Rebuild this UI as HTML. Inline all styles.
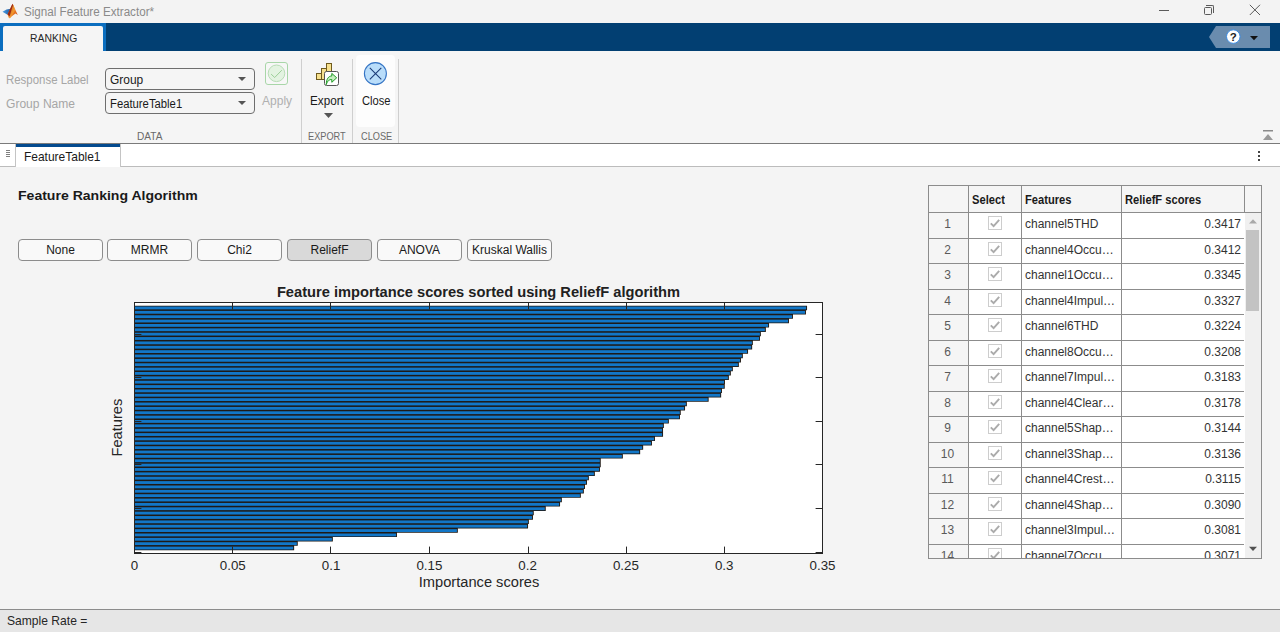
<!DOCTYPE html>
<html><head><meta charset="utf-8">
<style>
*{margin:0;padding:0;box-sizing:border-box}
html,body{width:1280px;height:632px;overflow:hidden;background:#f4f4f4;font-family:"Liberation Sans",sans-serif;color:#262626}
.abs{position:absolute}
.tx{position:absolute;white-space:nowrap;line-height:1;transform-origin:0 0}
#titlebar{position:absolute;left:0;top:0;width:1280px;height:23px;background:#f3f3f3}
#tabband{position:absolute;left:0;top:23px;width:1280px;height:28px;background:#023f72}
#tabhl{position:absolute;left:0;top:0;width:106px;height:28px;background:#0b6ebf}
#tab{position:absolute;left:3px;top:3px;width:100px;height:25px;background:#f5f5f5;border-radius:2px 2px 0 0}
#ribbon{position:absolute;left:0;top:51px;width:1280px;height:92px;background:#f5f5f5}
#ribline{position:absolute;left:0;top:143px;width:1280px;height:1px;background:#7a7a7a}
.dd{position:absolute;left:105px;width:150px;height:21.5px;border:1px solid #6e6e6e;border-radius:4px;background:#f5f5f5}
.dd i{position:absolute;right:8.5px;top:7.5px;width:0;height:0;border-left:4px solid transparent;border-right:4px solid transparent;border-top:4.5px solid #555}
.sep{position:absolute;top:59px;width:1px;height:84px;background:#cfcfcf}
#doctabs{position:absolute;left:0;top:144px;width:1280px;height:23px;background:#fff;border-bottom:1px solid #bcbcbc}
#dtab{position:absolute;left:15px;top:0;width:106px;height:23px;background:#fff;border-left:1px solid #c4c4c4;border-right:1px solid #c4c4c4}
#dtab b{position:absolute;left:0;top:0;width:104px;height:3px;background:#034a8e}
#status{position:absolute;left:0;top:609px;width:1280px;height:23px;background:#e6e6e6;border-top:1px solid #8c8c8c}
.btn{position:absolute;top:239px;width:85px;height:22px;border:1px solid #8c8c8c;border-radius:4px;background:#f9f9f9;font-size:12px;color:#1a1a1a;text-align:center;line-height:20px;white-space:nowrap}
.btn.sel{background:#d9d9d9}
.th{position:absolute;font-weight:bold;font-size:12.5px;color:#1a1a1a;white-space:nowrap;line-height:1;transform-origin:0 0}
.rn{position:absolute;height:25px;text-align:center;font-size:12px;color:#5a5a5a;line-height:25px}
.fn{position:absolute;font-size:12px;color:#333;line-height:25px;white-space:nowrap}
.sc{position:absolute;font-size:12px;color:#333;line-height:25px;text-align:right}
</style></head><body>
<div id="titlebar">
<svg class="abs" style="left:1px;top:2px" width="20" height="18" viewBox="0 0 20 18">
<defs><linearGradient id="lg1" x1="0" y1="0" x2="1" y2="0"><stop offset="0" stop-color="#4a9be0"/><stop offset="1" stop-color="#1f5fa8"/></linearGradient>
<linearGradient id="lg2" x1="0" y1="0" x2="1" y2="1"><stop offset="0" stop-color="#b83018"/><stop offset="0.5" stop-color="#f08a28"/><stop offset="1" stop-color="#c84018"/></linearGradient></defs>
<path d="M1.5 9.8 L5.5 7.6 L9.6 6.8 L8 10.5 L6.5 12.8 Z" fill="url(#lg1)"/>
<path d="M6.5 12.5 L11.5 1.8 L16.8 13 L14.5 11.5 L8 16.2 Z" fill="url(#lg2)"/>
<path d="M11.5 1.8 L13 6 L9 14.5 L6.5 12.5 Z" fill="#9a2a14"/><path d="M12.2 2.5 L14.2 8 L9.5 16 L8 16.2 Z" fill="#f29a30" opacity="0.85"/>
</svg>
<div class="abs" style="left:1159px;top:10px;width:10px;height:1px;background:#5a5a5a"></div>
<div class="abs" style="left:1204px;top:7px;width:8px;height:8px;border:1px solid #5a5a5a;border-radius:1.5px"></div>
<div class="abs" style="left:1206px;top:5px;width:8px;height:8px;border-top:1px solid #5a5a5a;border-right:1px solid #5a5a5a;border-radius:0 2px 0 0"></div>
<svg class="abs" style="left:1249px;top:4px" width="12" height="12" viewBox="0 0 12 12"><path d="M0.8 0.8 L11 11 M11 0.8 L0.8 11" stroke="#5a5a5a" stroke-width="1"/></svg>
</div>
<div id="tabband">
<div id="tabhl"><div id="tab"></div></div>
<svg class="abs" style="left:1209px;top:3px" width="62" height="22" viewBox="0 0 62 22"><path d="M0 11 L7 0 L61 0 L61 22 L7 22 Z" fill="#6a8cae"/>
<circle cx="24.3" cy="10.6" r="6.8" fill="#fff" stroke="#3a8ae0" stroke-width="1"/>
<text x="24.3" y="14.6" text-anchor="middle" font-family="Liberation Sans" font-weight="bold" font-size="11.5" fill="#222">?</text>
<path d="M41 10 L49 10 L45 14.3 Z" fill="#111"/></svg>
</div>
<div id="ribbon"></div>
<div class="dd" style="top:68px"><i></i></div>
<div class="dd" style="top:92px"><i></i></div>
<svg class="abs" style="left:265px;top:62px" width="23" height="23" viewBox="0 0 23 23">
<rect x="0.5" y="0.5" width="22" height="22" rx="2.5" fill="#f7f7f7" stroke="#a8d6a8"/>
<circle cx="11.5" cy="11.3" r="8.3" fill="#e3f3e1" stroke="#b8dcb6"/>
<path d="M6.1 12.1 L9.7 15.5 L16.8 8.2" fill="none" stroke="#9ccf98" stroke-width="1"/></svg>
<div class="sep" style="left:301px"></div>
<svg class="abs" style="left:315px;top:62px" width="25" height="25" viewBox="0 0 25 25">
<rect x="1.5" y="11.5" width="5" height="6" fill="#f6e08e" stroke="#6e5a1e"/>
<rect x="6.5" y="6.5" width="5" height="11" fill="#f6e08e" stroke="#6e5a1e"/>
<rect x="11.5" y="1.5" width="5" height="16" fill="#f6e08e" stroke="#6e5a1e"/>
<rect x="9.5" y="9.5" width="14" height="14" rx="2" fill="#fff" stroke="#555"/>
<path d="M11.3 22.6 C11.3 17 13.5 14 16.8 14 L16.8 11.4 L21.7 15.8 L16.8 20.3 L16.8 17.6 C14.6 17.2 12.4 18.8 11.3 22.6 Z" fill="#c6efbf" stroke="#1c9a22" stroke-width="1" stroke-linejoin="round"/></svg>
<svg class="abs" style="left:324px;top:113px" width="9" height="5" viewBox="0 0 9 5"><path d="M0 0 L9 0 L4.5 5 Z" fill="#555"/></svg>
<div class="sep" style="left:352px"></div>
<div class="abs" style="left:356px;top:55px;width:39px;height:72px;background:#fdfdfd;border-radius:4px"></div>
<svg class="abs" style="left:363px;top:61px" width="25" height="25" viewBox="0 0 25 25">
<circle cx="12.4" cy="12.6" r="11" fill="#b9ddfa" stroke="#3574c4" stroke-width="1.1"/>
<path d="M6.8 6.9 L18.3 18.4 M18.3 6.9 L6.8 18.4" stroke="#1c3c78" stroke-width="1.1"/></svg>
<div class="sep" style="left:398px"></div>
<svg class="abs" style="left:1262px;top:129px" width="12" height="12" viewBox="0 0 12 12"><rect x="1" y="1" width="10" height="1.5" fill="#8a8a8a"/><path d="M1 11 L6 5 L11 11 Z" fill="#9a9a9a"/></svg>
<div id="ribline"></div>
<div id="doctabs">
<div class="abs" style="left:6px;top:6px;width:4px;height:1px;background:#808080;box-shadow:0 2px 0 #808080,0 4px 0 #808080,0 6px 0 #808080"></div>
<div id="dtab"><b></b></div>
<div class="abs" style="left:1258px;top:6.5px;width:2px;height:2px;background:#444;box-shadow:0 4px 0 #444,0 8px 0 #444"></div>
</div>
<div class="btn" style="left:18.0px">None</div>
<div class="btn" style="left:107.0px">MRMR</div>
<div class="btn" style="left:197.0px">Chi2</div>
<div class="btn sel" style="left:287.0px">ReliefF</div>
<div class="btn" style="left:377.0px">ANOVA</div>
<div class="btn" style="left:467.0px">Kruskal Wallis</div>
<svg class="abs" width="1280" height="632" viewBox="0 0 1280 632" style="left:0;top:0">
<rect x="134.5" y="302.5" width="688" height="251" fill="#fff"/>
<path d="M134.50 305.77 L807.05 305.77 L807.05 310.13 L805.95 310.13 L805.95 314.50 L792.95 314.50 L792.95 318.86 L788.95 318.86 L788.95 323.23 L769.05 323.23 L769.05 327.59 L765.85 327.59 L765.85 331.96 L760.85 331.96 L760.85 336.32 L759.95 336.32 L759.95 340.69 L752.85 340.69 L752.85 345.05 L752.15 345.05 L752.15 349.42 L748.05 349.42 L748.05 353.78 L742.85 353.78 L742.85 358.15 L740.95 358.15 L740.95 362.51 L738.85 362.51 L738.85 366.88 L732.85 366.88 L732.85 371.24 L730.85 371.24 L730.85 375.61 L728.85 375.61 L728.85 379.97 L724.95 379.97 L724.95 384.34 L724.75 384.34 L724.75 388.70 L721.95 388.70 L721.95 393.07 L721.15 393.07 L721.15 397.43 L708.65 397.43 L708.65 401.80 L686.85 401.80 L686.85 406.16 L685.05 406.16 L685.05 410.53 L680.75 410.53 L680.75 414.89 L679.95 414.89 L679.95 419.26 L668.85 419.26 L668.85 423.62 L663.85 423.62 L663.85 427.99 L663.05 427.99 L663.05 432.35 L663.05 432.35 L663.05 436.72 L654.95 436.72 L654.95 441.08 L651.95 441.08 L651.95 445.45 L643.15 445.45 L643.15 449.81 L640.15 449.81 L640.15 454.18 L622.85 454.18 L622.85 458.54 L600.75 458.54 L600.75 462.91 L600.75 462.91 L600.75 467.27 L599.95 467.27 L599.95 471.64 L594.85 471.64 L594.85 476.00 L588.85 476.00 L588.85 480.37 L586.95 480.37 L586.95 484.73 L584.95 484.73 L584.95 489.10 L583.85 489.10 L583.85 493.46 L580.85 493.46 L580.85 497.83 L561.85 497.83 L561.85 502.19 L560.05 502.19 L560.05 506.56 L545.75 506.56 L545.75 510.92 L533.75 510.92 L533.75 515.29 L532.95 515.29 L532.95 519.65 L528.85 519.65 L528.85 524.02 L528.05 524.02 L528.05 528.38 L457.85 528.38 L457.85 532.75 L396.95 532.75 L396.95 537.11 L332.85 537.11 L332.85 541.48 L297.75 541.48 L297.75 545.84 L294.15 545.84 L294.15 550.21 L134.50 550.21 Z" fill="#1f1a16"/><g fill="#1277c8"><rect x="134.50" y="306.53" width="671.60" height="2.84"/>
<rect x="134.50" y="310.89" width="670.50" height="2.84"/>
<rect x="134.50" y="315.26" width="657.50" height="2.84"/>
<rect x="134.50" y="319.62" width="653.50" height="2.84"/>
<rect x="134.50" y="323.99" width="633.60" height="2.84"/>
<rect x="134.50" y="328.35" width="630.40" height="2.84"/>
<rect x="134.50" y="332.72" width="625.40" height="2.84"/>
<rect x="134.50" y="337.08" width="624.50" height="2.84"/>
<rect x="134.50" y="341.45" width="617.40" height="2.84"/>
<rect x="134.50" y="345.81" width="616.70" height="2.84"/>
<rect x="134.50" y="350.18" width="612.60" height="2.84"/>
<rect x="134.50" y="354.54" width="607.40" height="2.84"/>
<rect x="134.50" y="358.91" width="605.50" height="2.84"/>
<rect x="134.50" y="363.27" width="603.40" height="2.84"/>
<rect x="134.50" y="367.64" width="597.40" height="2.84"/>
<rect x="134.50" y="372.00" width="595.40" height="2.84"/>
<rect x="134.50" y="376.37" width="593.40" height="2.84"/>
<rect x="134.50" y="380.73" width="589.50" height="2.84"/>
<rect x="134.50" y="385.10" width="589.30" height="2.84"/>
<rect x="134.50" y="389.46" width="586.50" height="2.84"/>
<rect x="134.50" y="393.83" width="585.70" height="2.84"/>
<rect x="134.50" y="398.19" width="573.20" height="2.84"/>
<rect x="134.50" y="402.56" width="551.40" height="2.84"/>
<rect x="134.50" y="406.93" width="549.60" height="2.84"/>
<rect x="134.50" y="411.29" width="545.30" height="2.84"/>
<rect x="134.50" y="415.65" width="544.50" height="2.84"/>
<rect x="134.50" y="420.02" width="533.40" height="2.84"/>
<rect x="134.50" y="424.38" width="528.40" height="2.84"/>
<rect x="134.50" y="428.75" width="527.60" height="2.84"/>
<rect x="134.50" y="433.11" width="527.60" height="2.84"/>
<rect x="134.50" y="437.48" width="519.50" height="2.84"/>
<rect x="134.50" y="441.84" width="516.50" height="2.84"/>
<rect x="134.50" y="446.21" width="507.70" height="2.84"/>
<rect x="134.50" y="450.57" width="504.70" height="2.84"/>
<rect x="134.50" y="454.94" width="487.40" height="2.84"/>
<rect x="134.50" y="459.31" width="465.30" height="2.84"/>
<rect x="134.50" y="463.67" width="465.30" height="2.84"/>
<rect x="134.50" y="468.03" width="464.50" height="2.84"/>
<rect x="134.50" y="472.40" width="459.40" height="2.84"/>
<rect x="134.50" y="476.76" width="453.40" height="2.84"/>
<rect x="134.50" y="481.13" width="451.50" height="2.84"/>
<rect x="134.50" y="485.49" width="449.50" height="2.84"/>
<rect x="134.50" y="489.86" width="448.40" height="2.84"/>
<rect x="134.50" y="494.22" width="445.40" height="2.84"/>
<rect x="134.50" y="498.59" width="426.40" height="2.84"/>
<rect x="134.50" y="502.95" width="424.60" height="2.84"/>
<rect x="134.50" y="507.32" width="410.30" height="2.84"/>
<rect x="134.50" y="511.69" width="398.30" height="2.84"/>
<rect x="134.50" y="516.05" width="397.50" height="2.84"/>
<rect x="134.50" y="520.42" width="393.40" height="2.84"/>
<rect x="134.50" y="524.78" width="392.60" height="2.84"/>
<rect x="134.50" y="529.15" width="322.40" height="2.84"/>
<rect x="134.50" y="533.51" width="261.50" height="2.84"/>
<rect x="134.50" y="537.88" width="197.40" height="2.84"/>
<rect x="134.50" y="542.24" width="162.30" height="2.84"/>
<rect x="134.50" y="546.61" width="158.70" height="2.84"/></g>
<g stroke="#262626" stroke-width="1">
<line x1="134.50" y1="553.5" x2="134.50" y2="546.6"/><line x1="134.50" y1="302.5" x2="134.50" y2="309.4"/>
<line x1="232.50" y1="553.5" x2="232.50" y2="546.6"/><line x1="232.50" y1="302.5" x2="232.50" y2="309.4"/>
<line x1="330.50" y1="553.5" x2="330.50" y2="546.6"/><line x1="330.50" y1="302.5" x2="330.50" y2="309.4"/>
<line x1="429.50" y1="553.5" x2="429.50" y2="546.6"/><line x1="429.50" y1="302.5" x2="429.50" y2="309.4"/>
<line x1="528.50" y1="553.5" x2="528.50" y2="546.6"/><line x1="528.50" y1="302.5" x2="528.50" y2="309.4"/>
<line x1="626.50" y1="553.5" x2="626.50" y2="546.6"/><line x1="626.50" y1="302.5" x2="626.50" y2="309.4"/>
<line x1="724.50" y1="553.5" x2="724.50" y2="546.6"/><line x1="724.50" y1="302.5" x2="724.50" y2="309.4"/>
<line x1="822.50" y1="553.5" x2="822.50" y2="546.6"/><line x1="822.50" y1="302.5" x2="822.50" y2="309.4"/>
<line x1="134.5" y1="552.50" x2="141.4" y2="552.50"/><line x1="822.5" y1="552.50" x2="815.6" y2="552.50"/>
<line x1="134.5" y1="508.50" x2="141.4" y2="508.50"/><line x1="822.5" y1="508.50" x2="815.6" y2="508.50"/>
<line x1="134.5" y1="464.50" x2="141.4" y2="464.50"/><line x1="822.5" y1="464.50" x2="815.6" y2="464.50"/>
<line x1="134.5" y1="421.50" x2="141.4" y2="421.50"/><line x1="822.5" y1="421.50" x2="815.6" y2="421.50"/>
<line x1="134.5" y1="377.50" x2="141.4" y2="377.50"/><line x1="822.5" y1="377.50" x2="815.6" y2="377.50"/>
<line x1="134.5" y1="334.50" x2="141.4" y2="334.50"/><line x1="822.5" y1="334.50" x2="815.6" y2="334.50"/>
</g>
<rect x="134.5" y="302.5" width="688" height="251" fill="none" stroke="#262626" stroke-width="1"/>
<g font-family="Liberation Sans" font-size="13.33" fill="#262626">
<text id="xl0" x="134.50" y="569.8" text-anchor="middle">0</text>
<text id="xl1" x="232.79" y="569.8" text-anchor="middle">0.05</text>
<text id="xl2" x="331.07" y="569.8" text-anchor="middle">0.1</text>
<text id="xl3" x="429.36" y="569.8" text-anchor="middle">0.15</text>
<text id="xl4" x="527.64" y="569.8" text-anchor="middle">0.2</text>
<text id="xl5" x="625.93" y="569.8" text-anchor="middle">0.25</text>
<text id="xl6" x="724.21" y="569.8" text-anchor="middle">0.3</text>
<text id="xl7" x="822.50" y="569.8" text-anchor="middle">0.35</text>
</g>
<text id="c_title" x="478.5" y="296.6" text-anchor="middle" font-family="Liberation Sans" font-weight="bold" font-size="14.67" fill="#212121">Feature importance scores sorted using ReliefF algorithm</text>
<text id="c_xlab" x="479" y="586.9" text-anchor="middle" font-family="Liberation Sans" font-size="14.67" fill="#262626">Importance scores</text>
<text id="c_ylab" transform="translate(121.7 427.6) rotate(-90)" text-anchor="middle" font-family="Liberation Sans" font-size="14.67" fill="#262626">Features</text>
</svg>
<div class="abs" style="left:928px;top:185px;width:334px;height:374px;background:#fff"></div>
<div class="abs" style="left:928px;top:185px;width:334px;height:27px;background:#f5f5f5"></div>
<div class="abs" style="left:928px;top:212px;width:40px;height:346px;background:#f5f5f5"></div>
<div class="abs" style="left:1245px;top:213px;width:16px;height:345px;background:#f0f0f0"></div>
<svg class="abs" style="left:0;top:0" width="1280" height="632" viewBox="0 0 1280 632"><g stroke="#8c8c8c" stroke-width="1" shape-rendering="crispEdges">
<rect x="928.5" y="185.5" width="333" height="373" fill="none"/>
<line x1="968.5" y1="185" x2="968.5" y2="558"/>
<line x1="1021.5" y1="185" x2="1021.5" y2="558"/>
<line x1="1121.5" y1="185" x2="1121.5" y2="558"/>
<line x1="1244.5" y1="185" x2="1244.5" y2="212"/>
<line x1="928" y1="212.5" x2="1261" y2="212.5"/>
<line x1="928" y1="238.5" x2="1244" y2="238.5"/>
<line x1="928" y1="263.5" x2="1244" y2="263.5"/>
<line x1="928" y1="289.5" x2="1244" y2="289.5"/>
<line x1="928" y1="314.5" x2="1244" y2="314.5"/>
<line x1="928" y1="340.5" x2="1244" y2="340.5"/>
<line x1="928" y1="365.5" x2="1244" y2="365.5"/>
<line x1="928" y1="391.5" x2="1244" y2="391.5"/>
<line x1="928" y1="416.5" x2="1244" y2="416.5"/>
<line x1="928" y1="442.5" x2="1244" y2="442.5"/>
<line x1="928" y1="467.5" x2="1244" y2="467.5"/>
<line x1="928" y1="493.5" x2="1244" y2="493.5"/>
<line x1="928" y1="518.5" x2="1244" y2="518.5"/>
<line x1="928" y1="544.5" x2="1244" y2="544.5"/>
</g></svg>
<div class="th" style="left:972px;top:194px;font-size:12.2px;transform:scaleX(0.915)">Select</div>
<div class="th" style="left:1025px;top:194px;font-size:12.2px;transform:scaleX(0.915)">Features</div>
<div class="th" style="left:1125px;top:194px;font-size:12.2px;transform:scaleX(0.915)">ReliefF scores</div>
<div class="abs" style="left:0;top:0;width:1280px;height:558px;overflow:hidden">
<div class="rn" style="left:928px;top:212px;width:39px">1</div>
<svg class="abs" style="left:988px;top:216px" width="14" height="14" viewBox="0 0 14 14"><rect x="0.5" y="0.5" width="13" height="13" fill="#fff" stroke="#cdcdcd"/><path d="M2.8 7.4 L5.6 10.2 L11.2 3.8" fill="none" stroke="#ababab" stroke-width="1.9"/></svg>
<div class="fn" style="left:1025px;top:212px">channel5THD</div>
<div class="sc" style="left:1121px;top:212px;width:120px">0.3417</div>
<div class="rn" style="left:928px;top:238px;width:39px">2</div>
<svg class="abs" style="left:988px;top:242px" width="14" height="14" viewBox="0 0 14 14"><rect x="0.5" y="0.5" width="13" height="13" fill="#fff" stroke="#cdcdcd"/><path d="M2.8 7.4 L5.6 10.2 L11.2 3.8" fill="none" stroke="#ababab" stroke-width="1.9"/></svg>
<div class="fn" style="left:1025px;top:238px">channel4Occu&hellip;</div>
<div class="sc" style="left:1121px;top:238px;width:120px">0.3412</div>
<div class="rn" style="left:928px;top:263px;width:39px">3</div>
<svg class="abs" style="left:988px;top:267px" width="14" height="14" viewBox="0 0 14 14"><rect x="0.5" y="0.5" width="13" height="13" fill="#fff" stroke="#cdcdcd"/><path d="M2.8 7.4 L5.6 10.2 L11.2 3.8" fill="none" stroke="#ababab" stroke-width="1.9"/></svg>
<div class="fn" style="left:1025px;top:263px">channel1Occu&hellip;</div>
<div class="sc" style="left:1121px;top:263px;width:120px">0.3345</div>
<div class="rn" style="left:928px;top:289px;width:39px">4</div>
<svg class="abs" style="left:988px;top:293px" width="14" height="14" viewBox="0 0 14 14"><rect x="0.5" y="0.5" width="13" height="13" fill="#fff" stroke="#cdcdcd"/><path d="M2.8 7.4 L5.6 10.2 L11.2 3.8" fill="none" stroke="#ababab" stroke-width="1.9"/></svg>
<div class="fn" style="left:1025px;top:289px">channel4Impul&hellip;</div>
<div class="sc" style="left:1121px;top:289px;width:120px">0.3327</div>
<div class="rn" style="left:928px;top:314px;width:39px">5</div>
<svg class="abs" style="left:988px;top:318px" width="14" height="14" viewBox="0 0 14 14"><rect x="0.5" y="0.5" width="13" height="13" fill="#fff" stroke="#cdcdcd"/><path d="M2.8 7.4 L5.6 10.2 L11.2 3.8" fill="none" stroke="#ababab" stroke-width="1.9"/></svg>
<div class="fn" style="left:1025px;top:314px">channel6THD</div>
<div class="sc" style="left:1121px;top:314px;width:120px">0.3224</div>
<div class="rn" style="left:928px;top:340px;width:39px">6</div>
<svg class="abs" style="left:988px;top:344px" width="14" height="14" viewBox="0 0 14 14"><rect x="0.5" y="0.5" width="13" height="13" fill="#fff" stroke="#cdcdcd"/><path d="M2.8 7.4 L5.6 10.2 L11.2 3.8" fill="none" stroke="#ababab" stroke-width="1.9"/></svg>
<div class="fn" style="left:1025px;top:340px">channel8Occu&hellip;</div>
<div class="sc" style="left:1121px;top:340px;width:120px">0.3208</div>
<div class="rn" style="left:928px;top:365px;width:39px">7</div>
<svg class="abs" style="left:988px;top:369px" width="14" height="14" viewBox="0 0 14 14"><rect x="0.5" y="0.5" width="13" height="13" fill="#fff" stroke="#cdcdcd"/><path d="M2.8 7.4 L5.6 10.2 L11.2 3.8" fill="none" stroke="#ababab" stroke-width="1.9"/></svg>
<div class="fn" style="left:1025px;top:365px">channel7Impul&hellip;</div>
<div class="sc" style="left:1121px;top:365px;width:120px">0.3183</div>
<div class="rn" style="left:928px;top:391px;width:39px">8</div>
<svg class="abs" style="left:988px;top:395px" width="14" height="14" viewBox="0 0 14 14"><rect x="0.5" y="0.5" width="13" height="13" fill="#fff" stroke="#cdcdcd"/><path d="M2.8 7.4 L5.6 10.2 L11.2 3.8" fill="none" stroke="#ababab" stroke-width="1.9"/></svg>
<div class="fn" style="left:1025px;top:391px">channel4Clear&hellip;</div>
<div class="sc" style="left:1121px;top:391px;width:120px">0.3178</div>
<div class="rn" style="left:928px;top:416px;width:39px">9</div>
<svg class="abs" style="left:988px;top:420px" width="14" height="14" viewBox="0 0 14 14"><rect x="0.5" y="0.5" width="13" height="13" fill="#fff" stroke="#cdcdcd"/><path d="M2.8 7.4 L5.6 10.2 L11.2 3.8" fill="none" stroke="#ababab" stroke-width="1.9"/></svg>
<div class="fn" style="left:1025px;top:416px">channel5Shap&hellip;</div>
<div class="sc" style="left:1121px;top:416px;width:120px">0.3144</div>
<div class="rn" style="left:928px;top:442px;width:39px">10</div>
<svg class="abs" style="left:988px;top:446px" width="14" height="14" viewBox="0 0 14 14"><rect x="0.5" y="0.5" width="13" height="13" fill="#fff" stroke="#cdcdcd"/><path d="M2.8 7.4 L5.6 10.2 L11.2 3.8" fill="none" stroke="#ababab" stroke-width="1.9"/></svg>
<div class="fn" style="left:1025px;top:442px">channel3Shap&hellip;</div>
<div class="sc" style="left:1121px;top:442px;width:120px">0.3136</div>
<div class="rn" style="left:928px;top:467px;width:39px">11</div>
<svg class="abs" style="left:988px;top:471px" width="14" height="14" viewBox="0 0 14 14"><rect x="0.5" y="0.5" width="13" height="13" fill="#fff" stroke="#cdcdcd"/><path d="M2.8 7.4 L5.6 10.2 L11.2 3.8" fill="none" stroke="#ababab" stroke-width="1.9"/></svg>
<div class="fn" style="left:1025px;top:467px">channel4Crest&hellip;</div>
<div class="sc" style="left:1121px;top:467px;width:120px">0.3115</div>
<div class="rn" style="left:928px;top:493px;width:39px">12</div>
<svg class="abs" style="left:988px;top:497px" width="14" height="14" viewBox="0 0 14 14"><rect x="0.5" y="0.5" width="13" height="13" fill="#fff" stroke="#cdcdcd"/><path d="M2.8 7.4 L5.6 10.2 L11.2 3.8" fill="none" stroke="#ababab" stroke-width="1.9"/></svg>
<div class="fn" style="left:1025px;top:493px">channel4Shap&hellip;</div>
<div class="sc" style="left:1121px;top:493px;width:120px">0.3090</div>
<div class="rn" style="left:928px;top:518px;width:39px">13</div>
<svg class="abs" style="left:988px;top:522px" width="14" height="14" viewBox="0 0 14 14"><rect x="0.5" y="0.5" width="13" height="13" fill="#fff" stroke="#cdcdcd"/><path d="M2.8 7.4 L5.6 10.2 L11.2 3.8" fill="none" stroke="#ababab" stroke-width="1.9"/></svg>
<div class="fn" style="left:1025px;top:518px">channel3Impul&hellip;</div>
<div class="sc" style="left:1121px;top:518px;width:120px">0.3081</div>
<div class="rn" style="left:928px;top:544px;width:39px">14</div>
<svg class="abs" style="left:988px;top:548px" width="14" height="14" viewBox="0 0 14 14"><rect x="0.5" y="0.5" width="13" height="13" fill="#fff" stroke="#cdcdcd"/><path d="M2.8 7.4 L5.6 10.2 L11.2 3.8" fill="none" stroke="#ababab" stroke-width="1.9"/></svg>
<div class="fn" style="left:1025px;top:544px">channel7Occu&hellip;</div>
<div class="sc" style="left:1121px;top:544px;width:120px">0.3071</div>
</div>
<svg class="abs" style="left:1248px;top:218px" width="10" height="6" viewBox="0 0 10 6"><path d="M1 5.5 L5 1.2 L9 5.5 Z" fill="#a8a8a8"/></svg>
<div class="abs" style="left:1246px;top:230px;width:13px;height:81px;background:#c3c3c3"></div>
<svg class="abs" style="left:1248px;top:546px" width="10" height="6" viewBox="0 0 10 6"><path d="M1 0.8 L9 0.8 L5 5 Z" fill="#505050"/></svg>
<div id="status"></div>
<div class="tx" id="t_title" style="left:23.70px;top:5.74px;font-size:12px;color:#8a8a8a;font-weight:normal;transform:scaleX(0.9700)">Signal Feature Extractor*</div>
<div class="tx" id="t_rank" style="left:29.90px;top:33.15px;font-size:10.75px;color:#262626;font-weight:normal;transform:scaleX(0.9650)">RANKING</div>
<div class="tx" id="t_resp" style="left:5.50px;top:73.92px;font-size:12.5px;color:#a6a6a6;font-weight:normal;transform:scaleX(0.9150)">Response Label</div>
<div class="tx" id="t_grpn" style="left:5.80px;top:98.12px;font-size:12.5px;color:#a6a6a6;font-weight:normal;transform:scaleX(0.9650)">Group Name</div>
<div class="tx" id="t_dd1" style="left:109.90px;top:74.02px;font-size:12.5px;color:#1a1a1a;font-weight:normal;transform:scaleX(0.9560)">Group</div>
<div class="tx" id="t_dd2" style="left:109.90px;top:97.77px;font-size:12.5px;color:#1a1a1a;font-weight:normal;transform:scaleX(0.9030)">FeatureTable1</div>
<div class="tx" id="t_apply" style="left:262.10px;top:94.99px;font-size:12px;color:#b0b0b0;font-weight:normal;transform:scaleX(1.0000)">Apply</div>
<div class="tx" id="t_export" style="left:309.70px;top:95.04px;font-size:12px;color:#1a1a1a;font-weight:normal;transform:scaleX(0.9760)">Export</div>
<div class="tx" id="t_close" style="left:361.50px;top:95.04px;font-size:12px;color:#1a1a1a;font-weight:normal;transform:scaleX(0.9300)">Close</div>
<div class="tx" id="t_data" style="left:137.30px;top:130.65px;font-size:10.9px;color:#6a6a6a;font-weight:normal;transform:scaleX(0.9260)">DATA</div>
<div class="tx" id="t_exl" style="left:308.10px;top:130.92px;font-size:10.9px;color:#6a6a6a;font-weight:normal;transform:scaleX(0.8450)">EXPORT</div>
<div class="tx" id="t_cll" style="left:360.70px;top:130.92px;font-size:10.9px;color:#6a6a6a;font-weight:normal;transform:scaleX(0.8470)">CLOSE</div>
<div class="tx" id="t_dtab" style="left:24.10px;top:150.87px;font-size:12.2px;color:#1a1a1a;font-weight:normal;transform:scaleX(0.9820)">FeatureTable1</div>
<div class="tx" id="t_status" style="left:7.30px;top:613.70px;font-size:13px;color:#262626;font-weight:normal;transform:scaleX(0.9300)">Sample Rate =</div>
<div class="tx" id="t_fra" style="left:17.70px;top:188.69px;font-size:13.6px;color:#1a1a1a;font-weight:bold;transform:scaleX(1.0330)">Feature Ranking Algorithm</div>
</body></html>
